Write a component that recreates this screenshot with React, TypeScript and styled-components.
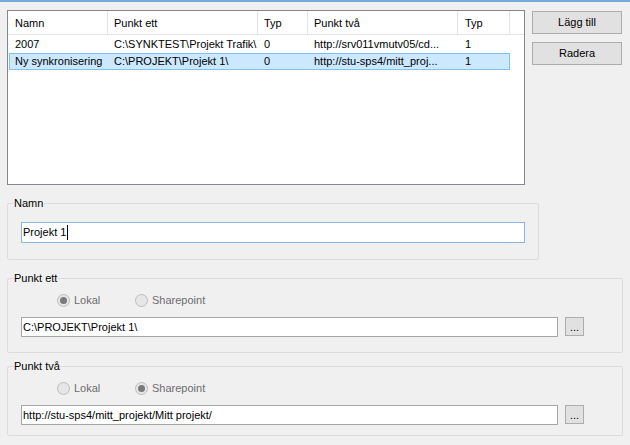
import React from "react";
import styled, { createGlobalStyle } from "styled-components";

const Global = createGlobalStyle`
  html, body { margin: 0; padding: 0; background: #f0f0f0; }
  body { width: 630px; height: 445px; overflow: hidden; }
  * { box-sizing: border-box; }
`;

const Window = styled.div`
  width: 630px;
  height: 445px;
  background: #f0f0f0;
  font-family: "Liberation Sans", Arial, sans-serif;
  font-size: 11px;
  color: #000;
`;

const TopEdge = styled.div`
  height: 2px;
  background: #74aadd;
`;

const Content = styled.div`
  padding: 8px 0 0 7px;
  display: flex;
  flex-direction: column;
`;

const TopRow = styled.div`
  display: flex;
  align-items: flex-start;
  gap: 7px;
`;

const ListView = styled.div`
  width: 518px;
  height: 175px;
  border: 1px solid #828790;
  background: #fff;
  overflow: hidden;
`;

const HeaderRow = styled.div`
  display: flex;
  height: 24px;
  border-bottom: 1px solid #e5e5e5;
`;

const HeaderCell = styled.div<{ $w: number; $pad: number }>`
  width: ${(p) => p.$w}px;
  flex: none;
  padding-left: ${(p) => p.$pad}px;
  padding-top: 1px;
  display: flex;
  align-items: center;
  border-right: 1px solid #e5e5e5;
  white-space: nowrap;
  line-height: 15px;
`;

const Rows = styled.div`
  padding: 1px 0 0 1px;
  display: flex;
  flex-direction: column;
`;

const Row = styled.div<{ $selected?: boolean }>`
  display: flex;
  width: 501px;
  height: 17px;
  border: 1px solid ${(p) => (p.$selected ? "#7fc1f0" : "transparent")};
  background: ${(p) => (p.$selected ? "#cce8ff" : "transparent")};
`;

const Cell = styled.div<{ $w: number; $pad: number }>`
  width: ${(p) => p.$w}px;
  flex: none;
  padding-left: ${(p) => p.$pad}px;
  line-height: 15px;
  white-space: nowrap;
  overflow: hidden;
`;

const ButtonCol = styled.div`
  display: flex;
  flex-direction: column;
  gap: 8px;
  padding-top: 1px;
`;

const PushButton = styled.div`
  width: 90px;
  height: 23px;
  border: 1px solid #adadad;
  background: #e1e1e1;
  display: flex;
  align-items: center;
  justify-content: center;
  line-height: 15px;
`;

const Group = styled.fieldset<{ $w: number; $mt: number; $pt: number; $pb: number }>`
  width: ${(p) => p.$w}px;
  margin: ${(p) => p.$mt}px 0 0 0;
  padding: ${(p) => p.$pt}px 5px ${(p) => p.$pb}px 5px;
  border: 1px solid #dcdcdc;
  border-radius: 2px;
  min-width: 0;
`;

const Legend = styled.legend`
  padding: 0 1px;
  line-height: 13px;
  font-size: 11px;
`;

const GroupBody = styled.div`
  padding-left: 8px;
  display: flex;
  flex-direction: column;
`;

const TextBox = styled.div<{ $w: number; $h: number; $focused?: boolean }>`
  width: ${(p) => p.$w}px;
  height: ${(p) => p.$h}px;
  background: #fff;
  border: 1px solid ${(p) => (p.$focused ? "#8ab6e3" : "#a6a6a6")};
  padding-left: 1px;
  display: flex;
  align-items: center;
  white-space: nowrap;
  line-height: 15px;
`;

const Caret = styled.span`
  display: inline-block;
  width: 1px;
  height: 15px;
  background: #000;
  margin-left: 1px;
`;

const RadioRow = styled.div`
  display: flex;
  height: 17px;
  margin-left: 36px;
  align-items: center;
`;

const RadioItem = styled.div`
  width: 78px;
  display: flex;
  align-items: center;
  gap: 4px;
  color: #6d6d6d;
  line-height: 15px;
`;

const RadioCircle = styled.span<{ $checked?: boolean }>`
  width: 13px;
  height: 13px;
  border-radius: 50%;
  border: 1px solid #bcbcbc;
  background: #e6e6e6;
  display: flex;
  align-items: center;
  justify-content: center;
  flex: none;
  &::after {
    content: "";
    width: 7px;
    height: 7px;
    border-radius: 50%;
    background: ${(p) => (p.$checked ? "#7a7a7a" : "transparent")};
  }
`;

const PathRow = styled.div`
  display: flex;
  align-items: flex-start;
  gap: 7px;
  margin-top: 8px;
`;

const BrowseButton = styled.div`
  width: 19px;
  height: 19px;
  border: 1px solid #adadad;
  background: #e1e1e1;
  display: flex;
  align-items: flex-end;
  justify-content: center;
  font-size: 11px;
  line-height: 13px;
  padding-bottom: 1px;
`;

const headerCols = [
  { label: "Namn", w: 100, pad: 7 },
  { label: "Punkt ett", w: 150, pad: 6 },
  { label: "Typ", w: 50, pad: 6 },
  { label: "Punkt två", w: 150, pad: 6 },
  { label: "Typ", w: 52, pad: 7 },
];

const rowCols = [
  { w: 98, pad: 5 },
  { w: 150, pad: 6 },
  { w: 50, pad: 6 },
  { w: 150, pad: 6 },
  { w: 51, pad: 7 },
];

const rows = [
  { cells: ["2007", "C:\\SYNKTEST\\Projekt Trafik\\", "0", "http://srv011vmutv05/cd...", "1"], selected: false },
  { cells: ["Ny synkronisering", "C:\\PROJEKT\\Projekt 1\\", "0", "http://stu-sps4/mitt_proj...", "1"], selected: true },
];

function PointGroup(props: {
  title: string;
  local: boolean;
  path: string;
  mt: number;
  pb: number;
}) {
  return (
    <Group $w={616} $mt={props.mt} $pt={7} $pb={props.pb}>
      <Legend>{props.title}</Legend>
      <GroupBody>
        <RadioRow>
          <RadioItem>
            <RadioCircle $checked={props.local} />
            Lokal
          </RadioItem>
          <RadioItem>
            <RadioCircle $checked={!props.local} />
            Sharepoint
          </RadioItem>
        </RadioRow>
        <PathRow>
          <TextBox $w={537} $h={20}>{props.path}</TextBox>
          <BrowseButton>...</BrowseButton>
        </PathRow>
      </GroupBody>
    </Group>
  );
}

export default function App() {
  return (
    <Window>
      <Global />
      <TopEdge />
      <Content>
        <TopRow>
          <ListView>
            <HeaderRow>
              {headerCols.map((c, i) => (
                <HeaderCell key={i} $w={c.w} $pad={c.pad}>
                  {c.label}
                </HeaderCell>
              ))}
            </HeaderRow>
            <Rows>
              {rows.map((r, i) => (
                <Row key={i} $selected={r.selected}>
                  {r.cells.map((t, j) => (
                    <Cell key={j} $w={rowCols[j].w} $pad={rowCols[j].pad}>
                      {t}
                    </Cell>
                  ))}
                </Row>
              ))}
            </Rows>
          </ListView>
          <ButtonCol>
            <PushButton>Lägg till</PushButton>
            <PushButton>Radera</PushButton>
          </ButtonCol>
        </TopRow>
        <Group $w={532} $mt={12} $pt={12} $pb={16}>
          <Legend>Namn</Legend>
          <GroupBody>
            <TextBox $w={504} $h={21} $focused>
              Projekt 1<Caret />
            </TextBox>
          </GroupBody>
        </Group>
        <PointGroup title="Punkt ett" local={true} path={"C:\\PROJEKT\\Projekt 1\\"} mt={12} pb={15} />
        <PointGroup
          title="Punkt två"
          local={false}
          path="http://stu-sps4/mitt_projekt/Mitt projekt/"
          mt={7}
          pb={10}
        />
      </Content>
    </Window>
  );
}
